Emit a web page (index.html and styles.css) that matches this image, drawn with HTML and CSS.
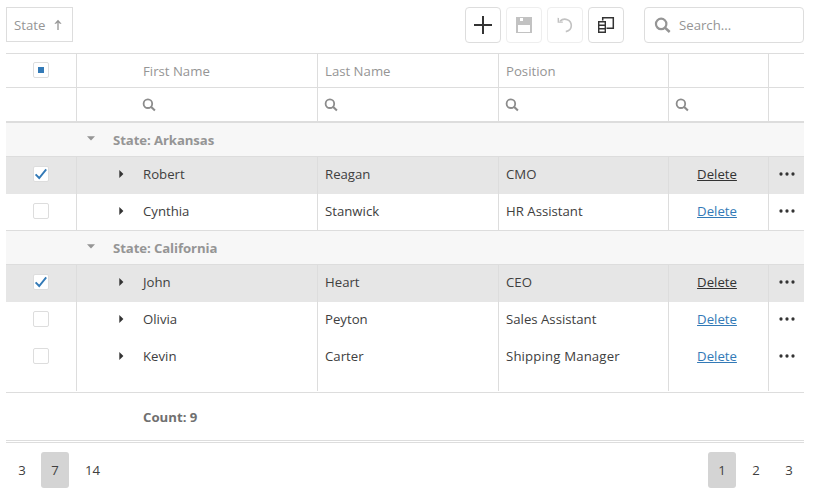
FILE: index.html
```html
<!DOCTYPE html>
<html lang="en">
<head>
<meta charset="utf-8">
<title>Employees</title>
<link rel="stylesheet" href="styles.css">
</head>
<body>
<svg class="sprite" aria-hidden="true">
  <symbol id="search" viewBox="0 0 14 14"><circle cx="5.9" cy="5.7" r="4.3" fill="none" stroke="currentColor" stroke-width="1.8"/><path d="M9 8.8L12.9 12.4" stroke="currentColor" stroke-width="2.1"/></symbol>
  <symbol id="check" viewBox="0 0 14 14"><path d="M1.6 7.3L5.2 11L12.2 2.4" fill="none" stroke="#337ab7" stroke-width="1.9"/></symbol>
  <symbol id="dots" viewBox="0 0 16 4"><g fill="#333"><circle cx="2" cy="2" r="1.65"/><circle cx="8" cy="2" r="1.65"/><circle cx="14" cy="2" r="1.65"/></g></symbol>
  <symbol id="right" viewBox="0 0 5 8"><path d="M0.3 0L4.4 4L0.3 8Z" fill="#333"/></symbol>
  <symbol id="down" viewBox="0 0 8 5"><path d="M0 0.3H8L4 4.5Z" fill="#959595"/></symbol>
</svg>
<main class="grid">
  <header class="toolbar">
    <div class="chip"><span>State</span><svg class="sort" viewBox="0 0 8 12"><path d="M4 3V11" fill="none" stroke="currentColor" stroke-width="1.3"/><path d="M4 0.8L7.6 4.8H6L4 3.2L2 4.8H0.4Z" fill="currentColor"/></svg></div>
    <div class="tools">
      <button class="tool"><svg viewBox="0 0 18 18"><path d="M9 0V18M0 9H18" stroke="#333" stroke-width="2"/></svg></button>
      <button class="tool off"><svg viewBox="0 0 18 18"><path fill="#c2c2c2" fill-rule="evenodd" d="M1 1H17V17H1ZM5 2H8V5H5ZM3 9H15V16H3Z"/></svg></button>
      <button class="tool off"><svg viewBox="0 0 18 18"><path d="M4 5.2C8.5 0.9 15.3 4 15.3 9.6C15.3 12.4 13.2 15 9.8 15.6" fill="none" stroke="#c2c2c2" stroke-width="1.6"/><path d="M1.6 1.8L3 2V5.4L6.8 5.6V6.8H1.6Z" fill="#c2c2c2"/></svg></button>
      <button class="tool"><svg viewBox="0 0 18 18"><path d="M5.7 4.6V1.8H16.3V12.3H9.5" fill="none" stroke="#333" stroke-width="1.5"/><path d="M1.7 5.7H8.3V16.3H1.7ZM1.7 9.2H8.3M1.7 12.7H8.3" fill="none" stroke="#333" stroke-width="1.4"/></svg></button>
      <label class="search"><svg><use href="#search"/></svg><span>Search...</span></label>
    </div>
  </header>
  <section class="table">
    <div class="row head"><div class="select"><i class="box some"></i></div><div class="first">First Name</div><div>Last Name</div><div>Position</div><div></div><div></div></div>
    <div class="row filter"><div></div><div class="first"><svg><use href="#search"/></svg></div><div><svg><use href="#search"/></svg></div><div><svg><use href="#search"/></svg></div><div><svg><use href="#search"/></svg></div><div></div></div>
    <div class="group"><svg><use href="#down"/></svg><span>State: Arkansas</span></div>
    <div class="row data selected"><div class="select"><i class="box"><svg><use href="#check"/></svg></i></div><div class="name"><svg><use href="#right"/></svg>Robert</div><div>Reagan</div><div>CMO</div><div class="action"><a>Delete</a></div><div class="more"><svg><use href="#dots"/></svg></div></div>
    <div class="row data last"><div class="select"><i class="box"></i></div><div class="name"><svg><use href="#right"/></svg>Cynthia</div><div>Stanwick</div><div>HR Assistant</div><div class="action"><a>Delete</a></div><div class="more"><svg><use href="#dots"/></svg></div></div>
    <div class="group"><svg><use href="#down"/></svg><span>State: California</span></div>
    <div class="row data selected"><div class="select"><i class="box"><svg><use href="#check"/></svg></i></div><div class="name"><svg><use href="#right"/></svg>John</div><div>Heart</div><div>CEO</div><div class="action"><a>Delete</a></div><div class="more"><svg><use href="#dots"/></svg></div></div>
    <div class="row data"><div class="select"><i class="box"></i></div><div class="name"><svg><use href="#right"/></svg>Olivia</div><div>Peyton</div><div>Sales Assistant</div><div class="action"><a>Delete</a></div><div class="more"><svg><use href="#dots"/></svg></div></div>
    <div class="row data"><div class="select"><i class="box"></i></div><div class="name"><svg><use href="#right"/></svg>Kevin</div><div>Carter</div><div class="wide">Shipping Manager</div><div class="action"><a>Delete</a></div><div class="more"><svg><use href="#dots"/></svg></div></div>
    <div class="row filler"><div></div><div></div><div></div><div></div><div></div><div></div></div>
  </section>
  <div class="summary">Count: 9</div>
  <footer class="pager">
    <div class="pages sizes"><span>3</span><span class="current">7</span><span>14</span></div>
    <div class="pages numbers"><span class="current">1</span><span>2</span><span>3</span></div>
  </footer>
</main>
</body>
</html>
```
FILE: styles.css
```css
* { box-sizing: border-box; }
body { margin: 0; background: #fff; color: #404040; font: 13.2px/18px "Open Sans", "Noto Sans", sans-serif; }
svg { display: block; flex: none; }
.sprite { display: none; }
.grid { width: 798px; margin-left: 6px; padding-top: 7px; }

.toolbar { display: flex; justify-content: space-between; align-items: flex-start; height: 46px; color: #959595; }
.chip { display: flex; align-items: center; width: 67px; height: 35px; padding-left: 7px; border: 1px solid #ddd; }
.sort { width: 8px; height: 12px; margin: 1px 0 0 9px; }
.tools { display: flex; gap: 5px; }
.tool { display: flex; align-items: center; justify-content: center; width: 36px; height: 36px; padding: 0; border: 1px solid #ddd; border-radius: 4px; background: #fff; }
.tool svg { width: 18px; height: 18px; }
.off { border-color: #eee; }
.search { display: flex; align-items: center; width: 160px; height: 36px; margin-left: 15px; padding-left: 9px; border: 1px solid #ddd; border-radius: 4px; }
.search svg { width: 17px; height: 17px; margin-right: 8px; }

.table { border-top: 1px solid #ddd; }
.row { display: grid; grid-template-columns: 71px 241px 181px 170px 100px 35px; height: 37px; }
.row > div { display: flex; align-items: center; padding-left: 7px; border-right: 1px solid #ddd; }
.row > div:last-child { border-right: 0; }
.row > .select { justify-content: center; padding-left: 0; }
.row > .first { padding-left: 66px; }
.head { height: 34px; border-bottom: 1px solid #ddd; color: #959595; }
.head > .select { padding-bottom: 1px; }
.filter { height: 35px; border-bottom: 2px solid #ddd; color: #8c8c8c; }
.filter svg { width: 14px; height: 14px; margin-left: -1px; }
.data > div { padding-bottom: 3px; }
.last { border-bottom: 1px solid #ddd; }
.last > div { padding-bottom: 2px; }
.filler { height: 15px; }
.group { display: flex; align-items: center; height: 34px; padding-left: 81px; border-bottom: 1px solid #ddd; background: #f7f7f7; color: #959595; font-weight: 700; letter-spacing: -0.1px; }
.group svg { width: 8px; height: 5px; margin: 0 18px 2px 0; }
.selected { background: #e6e6e6; }
.box { display: flex; align-items: center; justify-content: center; width: 16px; height: 16px; border: 1px solid #ddd; border-radius: 2px; background: #fff; }
.box svg { width: 14px; height: 14px; }
.some::before { content: ""; width: 6px; height: 6px; background: #337ab7; }
.row > .name { padding-left: 42px; }
.name svg { width: 5px; height: 8px; margin-right: 19px; }
.row > .wide { letter-spacing: 0.15px; }
.row > .action { justify-content: center; padding-left: 0; padding-right: 3px; }
.action a { color: #337ab7; text-decoration: underline; }
.selected .action a { color: #333; }
.row > .more { justify-content: center; padding-left: 0; }
.more svg { width: 16px; height: 4px; }

.summary { display: flex; align-items: center; height: 49px; margin-top: 1px; padding-left: 137px; border-top: 1px solid #ddd; border-bottom: 1px solid #ddd; color: #707070; font-weight: 700; }
.pager { display: flex; justify-content: space-between; margin-top: 1px; padding-top: 9px; border-top: 1px solid #ddd; }
.pages { display: flex; gap: 5px; }
.pages span { display: flex; align-items: center; justify-content: center; min-width: 28px; height: 36px; border-radius: 3px; }
.sizes { margin-left: 2px; }
.sizes span:last-child { width: 37px; }
.numbers { gap: 6px; }
.numbers span:last-child { margin-left: -1px; margin-right: 1px; }
.current { background: #d4d4d4; }
```
